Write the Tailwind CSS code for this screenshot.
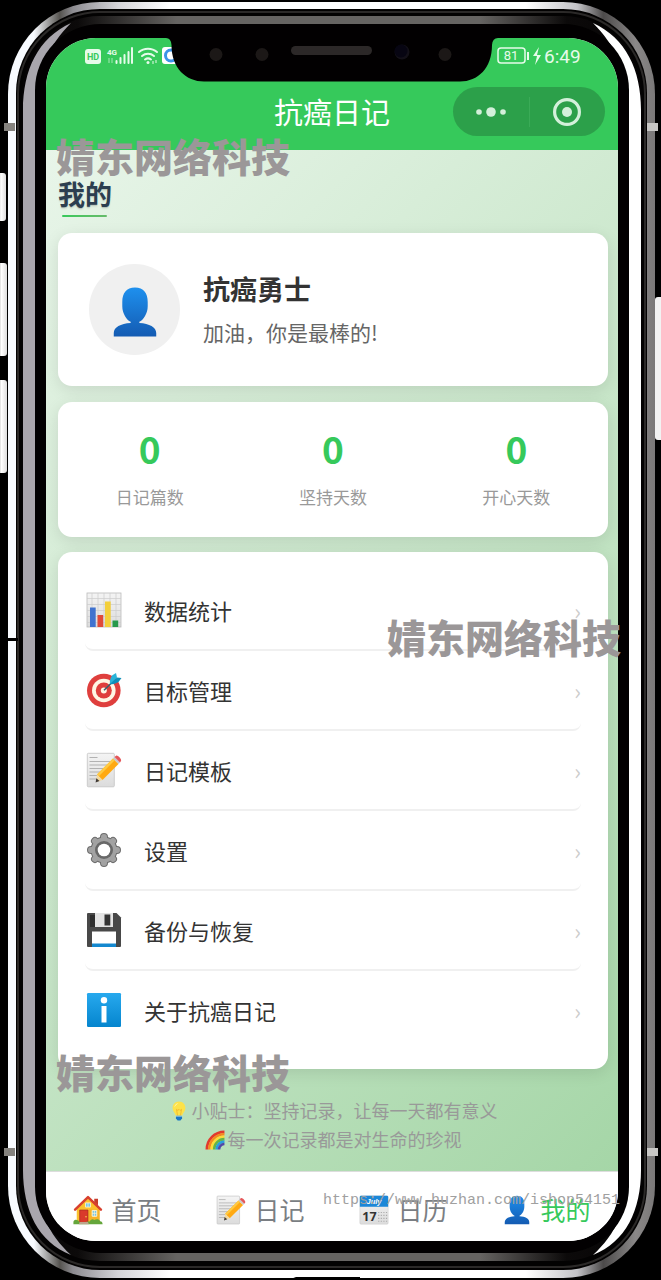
<!DOCTYPE html>
<html lang="zh-CN">
  <head>
    <meta charset="utf-8" />
    <meta name="viewport" content="width=device-width, initial-scale=1" />
    <title>抗癌日记 - 我的</title>
    <script src="https://cdn.jsdelivr.net/npm/@tailwindcss/browser@4"></script>
  </head>
  <body class="bg-black font-['Noto_Sans_CJK_SC',sans-serif] text-[#333]">

    <!-- shared icons -->
    <svg class="absolute size-0" aria-hidden="true">
      <defs>
        <linearGradient id="blue" x1="0" y1="0" x2="0" y2="1"><stop offset="0" stop-color="#1e90ee" /><stop offset="1" stop-color="#145bb2" /></linearGradient>
        <linearGradient id="paper" x1="0" y1="0" x2="0" y2="1"><stop offset="0" stop-color="#f4f4f4" /><stop offset="1" stop-color="#dcdcdc" /></linearGradient>
        <linearGradient id="info" x1="0" y1="0" x2="0" y2="1"><stop offset="0" stop-color="#27a9ee" /><stop offset="1" stop-color="#0585ce" /></linearGradient>
        <symbol id="i-user" viewBox="0 0 36 36">
          <path fill="url(#blue)" d="M18 1c-6 0-8.800 4-8.800 10v3c0 5 3 9.500 5.800 10.800v.8C8 26 3.300 28.500 3.300 32.500V35h29.400v-2.500c0-4-4.700-6.500-11.700-6.900v-.8c2.800-1.300 5.800-5.800 5.800-10.800v-3C26.800 5 24 1 18 1z" />
        </symbol>
        <symbol id="i-memo" viewBox="0 0 36 36">
          <rect x="1.300" y="1.300" width="27" height="33.500" rx="1" fill="url(#paper)" stroke="#c4c4c4" stroke-width=".8" />
          <path d="M3.500 5.500h8M3.500 9.500h22M3.500 13h21M3.500 16.500h18M3.500 20h15M3.500 23.500h11M3.500 27h8" stroke="#aaa" stroke-width=".9" />
          <path fill="#ffa912" d="M11 22.500 27 6.500l5.500 5.500-16 16z" />
          <path fill="#ffca42" d="M11 22.500 27 6.500l1.800 1.800-16 16z" />
          <path fill="#f3d9a0" d="m11 22.500 5.500 5.500-6.500 2.300z" />
          <path fill="#3f3a38" d="m10.300 26.300 3.200 2.800-3.900 1.400z" />
          <path fill="#c9c9c9" d="m27 6.500 1.500-1.500 5.500 5.500-1.500 1.500z" />
          <path fill="#e5575a" d="M28.500 5 30 3.700c1.200-1 6 3.300 5 5.200L34 10.500z" />
        </symbol>
        <symbol id="i-chart" viewBox="0 0 36 36">
          <rect x="1" y="1" width="34" height="34" fill="url(#paper)" stroke="#bbb" stroke-width=".8" />
          <path d="M1 6.500h34M1 12.500h34M1 18.500h34M1 24.500h34M1 30.500h34M6 1v34M12 1v34M18 1v34M24 1v34M30 1v34" stroke="#ccc" stroke-width=".7" />
          <path fill="#3f72cf" d="M4 15.500h5.700V35H4z" />
          <path fill="#e04a39" d="M11.500 23h5.700v12h-5.700z" />
          <path fill="#f3cf3b" d="M19 9.500h5.700V35H19z" />
          <path fill="#289a4c" d="M26.500 28.500h5.700V35h-5.700z" />
        </symbol>
        <symbol id="i-target" viewBox="0 0 36 36">
          <circle cx="17.800" cy="18.500" r="16.800" fill="#df3f3d" />
          <circle cx="17.800" cy="18.500" r="11.800" fill="#fff6e4" />
          <circle cx="17.800" cy="18.500" r="8" fill="#df3f3d" />
          <circle cx="17.800" cy="18.500" r="3" fill="#fff6e4" />
          <path d="M18 18.300 27 9.500" stroke="#39616e" stroke-width="1.500" />
          <path fill="#29b3d8" d="M24 12c-.7-3 .5-6 2-8.500L30 1l1 4.500L26 11z" />
          <path fill="#0f8fb9" d="M24 12c3 .7 6-.5 8.500-2L35.500 6 31 5.500z" />
        </symbol>
        <symbol id="i-gear" viewBox="0 0 36 36">
          <g stroke-linecap="round" stroke="#6c6c6c" stroke-width="8">
            <path d="M18 5v26M5 18h26M9 9l18 18M27 9 9 27" />
          </g>
          <circle cx="18" cy="18" r="13.500" fill="#6c6c6c" />
          <g stroke-linecap="round" stroke="#a2a2a2" stroke-width="6">
            <path d="M18 5v26M5 18h26M9 9l18 18M27 9 9 27" />
          </g>
          <circle cx="18" cy="18" r="12.500" fill="#a2a2a2" />
          <circle cx="18" cy="18" r="9" fill="#686868" />
          <circle cx="18" cy="18" r="6.300" fill="#fff" />
        </symbol>
        <symbol id="i-floppy" viewBox="0 0 36 36">
          <path fill="#484848" d="M2 1h28.500L35 5.500V34a1 1 0 0 1-1 1H2a1 1 0 0 1-1-1V2a1 1 0 0 1 1-1z" />
          <path fill="#e3e3e3" d="M9 1h18v14H9z" />
          <path fill="#333" d="M18.500 2.500h5.800v11h-5.800z" />
          <path fill="#2e2e2e" d="M4 3h5v12H4z" />
          <path fill="#fff" d="M6 19.500h24V32H6z" />
          <path fill="#1488cf" d="M6 31.500h24V35H6z" />
        </symbol>
        <symbol id="i-info" viewBox="0 0 36 36">
          <rect x="1" y="1" width="34" height="34" rx="1.200" fill="url(#info)" />
          <circle cx="18" cy="8.300" r="3.200" fill="#fff" />
          <path fill="#fff" d="M15.500 14h5v16.500h-5z" />
        </symbol>
        <symbol id="i-house" viewBox="0 0 36 36">
          <path fill="#c63d2b" d="M25.500 4.500h4.500v8l-4.500-4z" />
          <path fill="#fbc02d" d="M4.500 16 18 3l14 13v17.500H4.500z" />
          <path fill="#f19b1f" d="M19 17h13v16.500H19z" opacity=".35" />
          <path fill="none" stroke="#d8402f" stroke-width="3" stroke-linejoin="round" stroke-linecap="round" d="M2.500 17.500 18 2.500l15.500 15" />
          <path fill="#74c5ea" stroke="#fff3d0" stroke-width="1" d="M15 9.500h6v5h-6z" />
          <path stroke="#fff3d0" stroke-width=".8" d="M18 9.500v5" />
          <path fill="#d93a2b" stroke="#a12a20" stroke-width=".8" d="M8 18h10v15H8z" />
          <circle cx="15.600" cy="26" r=".9" fill="#ffd54f" />
          <path fill="#74c5ea" stroke="#fff3d0" stroke-width="1.200" d="M23 18.500h5.500v7H23z" />
          <path stroke="#fff3d0" stroke-width=".9" d="M25.700 18.500v7M23 22h5.500" />
          <path fill="#65a63b" d="M.5 35v-2.500c0-2 2-3.500 4-2.500 1.500 0 2.700 1 3 2.500h9v-.8h3v.8c2-3.500 4-4 6-2.500 3-1.500 6-1 7 1.500 2 0 3 1.500 3 3.500z" />
          <path fill="#bda58c" d="M8 32.500h10L19 35H7z" />
        </symbol>
        <symbol id="i-calendar" viewBox="0 0 36 36">
          <rect x="1" y="1" width="34" height="34" rx="1.500" fill="url(#paper)" stroke="#ccc" stroke-width=".6" />
          <path fill="#1b87d8" d="M2.500 1h31A1.500 1.500 0 0 1 35 2.500V14H1V2.500A1.500 1.500 0 0 1 2.500 1z" />
          <text x="18" y="11" text-anchor="middle" font-size="9" font-style="italic" font-weight="700" font-family="Liberation Sans" fill="#fff">July</text>
          <text x="12.500" y="31.500" text-anchor="middle" font-size="15" font-weight="700" font-family="Noto Sans" fill="#333">17</text>
          <path stroke="#aaa" stroke-width="1.400" stroke-dasharray="1.400 1.700" d="M23 21h11M23 24.500h11M23 28h11M23 31.500h11" />
        </symbol>
        <symbol id="i-bulb" viewBox="0 0 36 36">
          <path fill="#fde24a" d="M18 1C10.500 1 6.500 6.500 6.500 12.500c0 6.500 5 8.500 6 14.500h11c1-6 6-8 6-14.500C29.500 6.500 25.500 1 18 1z" />
          <path fill="#fff7b0" d="M17 4c-4 0-7 3-7.300 7.500C12 8 14 6 17 4z" />
          <path fill="none" stroke="#f2b52c" stroke-width="1.500" d="m13.500 15 2.500 2 2-2 2 2 2.500-2-2 12h-5z" />
          <path fill="#8fc7dc" d="M12.500 26h11v3h-11z" />
          <path fill="#1976c5" d="M12.500 28.500h11v3L20.500 35h-5l-3-3.500z" />
        </symbol>
        <symbol id="i-rainbow" viewBox="0 0 36 36">
          <g fill="none" stroke-width="4.700">
            <path stroke="#e23a2e" d="M3.300 35C3.300 17.500 17.500 3.300 35 3.300" />
            <path stroke="#f58a1f" d="M7.700 35C7.700 20 20 7.700 35 7.700" />
            <path stroke="#fbdc3a" d="M12.100 35C12.100 22.300 22.300 12.100 35 12.100" />
            <path stroke="#67b544" d="M16.500 35c0-10.200 8.300-18.500 18.500-18.500" />
            <path stroke="#289fdf" d="M20.900 35c0-7.800 6.300-14.100 14.100-14.100" />
            <path stroke="#5146a8" d="M25.300 35c0-5.400 4.300-9.700 9.700-9.700" />
          </g>
        </symbol>
      </defs>
    </svg>

    <div class="relative flex min-h-screen overflow-hidden pt-[38px] pr-[43px] pb-[39px] pl-[46px]">

      <!-- phone shell -->
      <svg class="absolute inset-0 h-full w-full" viewBox="0 0 661 1280" preserveAspectRatio="none" aria-hidden="true">
        <defs>
          <linearGradient id="rim" x1="0" y1="0" x2="1" y2="0">
            <stop offset="0" stop-color="#f8fbff" /><stop offset=".04" stop-color="#f8fbff" /><stop offset=".08" stop-color="#55534f" /><stop offset=".1" stop-color="#8c8b90" /><stop offset=".17" stop-color="#d4d4d8" /><stop offset=".25" stop-color="#fff" />
            <stop offset=".8" stop-color="#fff" /><stop offset=".88" stop-color="#c2c2c6" /><stop offset=".92" stop-color="#4c4a4a" /><stop offset=".97" stop-color="#8a8888" /><stop offset="1" stop-color="#7a7878" />
          </linearGradient>
          <linearGradient id="band" x1="0" y1="0" x2="1" y2="0">
            <stop offset="0" stop-color="#050304" /><stop offset=".09" stop-color="#0c0a0a" /><stop offset=".25" stop-color="#666462" /><stop offset=".74" stop-color="#666462" /><stop offset=".88" stop-color="#0c0a0a" /><stop offset="1" stop-color="#050304" />
          </linearGradient>
          <linearGradient id="key" x1="0" y1="0" x2="1" y2="0"><stop offset="0" stop-color="#777" /><stop offset=".5" stop-color="#fff" /><stop offset="1" stop-color="#ddd" /></linearGradient>
        </defs>
        <rect x="8" y="2" width="647" height="1276" rx="92" fill="url(#rim)" />
        <rect x="16" y="9" width="631" height="1261" rx="84" fill="#030202" />
        <rect x="18" y="12" width="627" height="1255" rx="82" fill="none" stroke="#2b2928" stroke-width="2" />
        <rect x="22" y="16" width="619" height="1245" rx="78" fill="url(#band)" />
        <path fill="#a9a6ad" d="M71 23C38 38 23 70 23 110v1060c0 40 15 72 48 85-22-20-36-48-36-85V110c0-37 14-65 36-87z" />
        <path fill="#fff" d="M593 23c33 15 48 47 48 87v1060c0 40-15 72-48 85 22-20 36-48 36-85V110c0-37-14-65-36-87z" />
        <rect x="35" y="24" width="594" height="1229" rx="66" fill="#020001" />
        <path fill="#000" d="M8 638h10v3H8zM296 1277h64v3h-72z" />
        <path fill="#85837f" d="M4 123h11v8H4zM4 1148h11v8H4z" />
        <path fill="#c8c7c5" d="M647 123h11v8h-11zM647 1148h11v8h-11z" />
        <rect x="-4" y="173" width="10" height="48" rx="3" fill="url(#key)" />
        <rect x="-4" y="263" width="11" height="93" rx="3" fill="url(#key)" />
        <rect x="-4" y="380" width="11" height="93" rx="3" fill="url(#key)" />
        <rect x="655" y="297" width="12" height="143" rx="3" fill="#f2f2f2" />
      </svg>

      <div class="relative flex flex-1 flex-col overflow-hidden rounded-[50px] bg-white">

        <header class="bg-[#36c95b] text-white">
          <div class="flex h-9 items-center justify-between pr-9 pl-[39px]">
            <svg class="h-5 w-[94px]" viewBox="0 0 94 20" aria-label="HD 4G">
              <rect x="0" y="3" width="16" height="15" rx="3" fill="#e6fbea" />
              <text x="8" y="14" text-anchor="middle" font-size="9" font-weight="700" font-family="Roboto" fill="#36c95b">HD</text>
              <text x="22" y="9" font-size="8" font-weight="700" font-family="Roboto" fill="#e6fbea">4G</text>
              <path d="M24 12v5M27 12v5" stroke="#a5e8b5" stroke-width="1" />
              <path d="M31.500 17v-2M35.500 17v-5M39.500 17v-8M43.500 17V6M47 17V2" stroke="#e6fbea" stroke-width="2" stroke-linecap="round" />
              <g fill="none" stroke="#e6fbea" stroke-width="2" stroke-linecap="round">
                <path d="M54 6c5-4.500 13-4.500 18 0M57 10c3.500-3 8.500-3 12 0M60 13.500c2-1.500 4-1.500 6 0" />
              </g>
              <circle cx="63" cy="16.500" r="1.500" fill="#e6fbea" />
              <path d="M68 15v3M71 14v3" stroke="#e6fbea" stroke-width="1" />
              <rect x="77" y="1" width="16" height="17" rx="3" fill="#fff" />
              <circle cx="86" cy="9.500" r="5.500" fill="none" stroke="#3b93e8" stroke-width="3" />
            </svg>
            <svg class="h-5 w-[85px]" viewBox="0 0 85 20" aria-label="81% 6:49">
              <rect x="1" y="2" width="27" height="15" rx="3" fill="none" stroke="#e6fbea" stroke-width="1.500" />
              <text x="14" y="14" text-anchor="middle" font-size="13" font-family="Roboto" fill="#e6fbea">81</text>
              <path d="M31 6v8" stroke="#e6fbea" stroke-width="2" />
              <path fill="#e6fbea" d="m42 1-6 9h4l-2 9 6-10h-4z" />
              <text x="47" y="17" font-size="19" font-family="Roboto" fill="#e6fbea">6:49</text>
            </svg>
          </div>
          <div class="relative flex h-[76px] items-center justify-center">
            <h1 class="pb-0.5 text-[29px] leading-none">抗癌日记</h1>
            <div class="absolute top-[13px] right-[13px] flex h-[49px] w-[152px] items-center rounded-full bg-[#2ca04a]">
              <button class="flex flex-1 justify-center" aria-label="更多">
                <svg class="h-[10px] w-[30px]" viewBox="0 0 30 10" fill="#d3f0da"><circle cx="3" cy="5" r="2.800" /><circle cx="15" cy="5" r="4.800" /><circle cx="27" cy="5" r="2.800" /></svg>
              </button>
              <span class="h-[30px] w-px bg-[#3aab57]"></span>
              <button class="flex flex-1 justify-center" aria-label="关闭">
                <svg class="size-7" viewBox="0 0 28 28"><circle cx="14" cy="14" r="12.400" fill="none" stroke="#d3f0da" stroke-width="3.200" /><circle cx="14" cy="14" r="5" fill="#d3f0da" /></svg>
              </button>
            </div>
          </div>
        </header>

        <!-- notch -->
        <svg class="absolute top-0 left-1/2 h-11 w-[332px] -translate-x-1/2" viewBox="0 0 332 44" aria-hidden="true">
          <path fill="#020001" d="M0 0q5 0 5.500 7C5.500 30 20 43.500 38 43.500h256C312 43.500 326 30 326 7q.5-7 6-7z" />
          <g fill="#1c1817"><circle cx="50" cy="16.500" r="6.500" /><circle cx="96" cy="16.500" r="6.500" /><circle cx="279" cy="16.500" r="6.500" /></g>
          <rect x="125" y="8" width="81" height="9" rx="4.500" fill="#2c2828" />
          <circle cx="236" cy="14" r="7.500" fill="#131018" /><circle cx="235" cy="13" r="6.500" fill="#070512" />
        </svg>

        <main class="flex-1 bg-linear-135 from-[#e8f5e9] via-[#c8e6c9] to-[#a5d6a7] pt-7 pr-[10px] pb-4 pl-3">
          <h2 class="text-[27px] leading-8 font-bold text-[#2c3e50] text-shadow-sm">我的</h2>
          <div class="mt-[5px] ml-1 h-0.5 w-[45px] rounded-full bg-linear-to-r from-[#36c95b] to-[#66bb6a]"></div>

          <section class="mt-4 flex h-[153px] items-center gap-[23px] rounded-[14px] bg-white px-[31px] shadow-[0_4px_16px_rgba(0,0,0,0.1)]">
            <div class="flex size-[91px] shrink-0 items-center justify-center rounded-full bg-[#f0f0f0]">
              <svg class="mt-1 size-[52px]"><use href="#i-user" /></svg>
            </div>
            <div>
              <p class="text-[27px] leading-[44px] font-bold">抗癌勇士</p>
              <p class="text-[21px] leading-[42px] text-[#666]">加油，你是最棒的!</p>
            </div>
          </section>

          <section class="mt-4 grid h-[135px] grid-cols-3 items-center rounded-[14px] bg-white pb-0.5 text-center shadow-[0_4px_16px_rgba(0,0,0,0.1)]">
            <div>
              <p class="text-[37px] leading-[56px] font-bold text-[#36c95b]">0</p>
              <p class="text-[17px] leading-[42px] text-[#999]">日记篇数</p>
            </div>
            <div>
              <p class="text-[37px] leading-[56px] font-bold text-[#36c95b]">0</p>
              <p class="text-[17px] leading-[42px] text-[#999]">坚持天数</p>
            </div>
            <div>
              <p class="text-[37px] leading-[56px] font-bold text-[#36c95b]">0</p>
              <p class="text-[17px] leading-[42px] text-[#999]">开心天数</p>
            </div>
          </section>

          <nav class="mt-[15px] rounded-[14px] bg-white px-[27px] pt-[19px] pb-[18px] text-[22px] shadow-[0_4px_16px_rgba(0,0,0,0.1)]">
            <a href="#stats" class="flex h-20 items-center rounded-lg border-b-2 border-[#f0f0f0]">
              <svg class="mr-[22px] ml-px size-9"><use href="#i-chart" /></svg>
              <span class="flex-1">数据统计</span>
              <span class="text-[#ccc]">›</span>
            </a>
            <a href="#goals" class="flex h-20 items-center rounded-lg border-b-2 border-[#f0f0f0]">
              <svg class="mr-[22px] ml-px size-9"><use href="#i-target" /></svg>
              <span class="flex-1">目标管理</span>
              <span class="text-[#ccc]">›</span>
            </a>
            <a href="#templates" class="flex h-20 items-center rounded-lg border-b-2 border-[#f0f0f0]">
              <svg class="mr-[22px] ml-px size-9"><use href="#i-memo" /></svg>
              <span class="flex-1">日记模板</span>
              <span class="text-[#ccc]">›</span>
            </a>
            <a href="#settings" class="flex h-20 items-center rounded-lg border-b-2 border-[#f0f0f0]">
              <svg class="mr-[22px] ml-px size-9"><use href="#i-gear" /></svg>
              <span class="flex-1">设置</span>
              <span class="text-[#ccc]">›</span>
            </a>
            <a href="#backup" class="flex h-20 items-center rounded-lg border-b-2 border-[#f0f0f0]">
              <svg class="mr-[22px] ml-px size-9"><use href="#i-floppy" /></svg>
              <span class="flex-1">备份与恢复</span>
              <span class="text-[#ccc]">›</span>
            </a>
            <a href="#about" class="flex h-20 items-center border-b-2 border-transparent">
              <svg class="mr-[22px] ml-px size-9"><use href="#i-info" /></svg>
              <span class="flex-1">关于抗癌日记</span>
              <span class="text-[#ccc]">›</span>
            </a>
          </nav>

          <div class="mt-[27px] text-lg leading-[29px] text-[#999]">
            <p class="flex items-center justify-center gap-[3px]"><svg class="size-5"><use href="#i-bulb" /></svg>小贴士：坚持记录，让每一天都有意义</p>
            <p class="flex items-center justify-center gap-[3px]"><svg class="size-5"><use href="#i-rainbow" /></svg>每一次记录都是对生命的珍视</p>
          </div>
        </main>

        <nav class="grid h-[70px] grid-cols-4 border-t border-[#ddd] bg-white text-[25px] text-[#7a7e83]">
          <a href="#home" class="flex items-center justify-center gap-2 pt-1.5"><svg class="size-[30px]"><use href="#i-house" /></svg>首页</a>
          <a href="#diary" class="flex items-center justify-center gap-2 pt-1.5"><svg class="size-[30px]"><use href="#i-memo" /></svg>日记</a>
          <a href="#calendar" class="flex items-center justify-center gap-2 pt-1.5"><svg class="size-[30px]"><use href="#i-calendar" /></svg>日历</a>
          <a href="#mine" class="flex items-center justify-center gap-2 pt-1.5 text-[#36c95b]"><svg class="size-[30px]"><use href="#i-user" /></svg>我的</a>
        </nav>
      </div>

      <!-- watermarks -->
      <p class="pointer-events-none absolute top-[132px] left-[56px] text-[39px] leading-[46px] font-black whitespace-nowrap text-[#9b9798]">婧东网络科技</p>
      <p class="pointer-events-none absolute top-[613px] left-[387px] text-[39px] leading-[46px] font-black whitespace-nowrap text-[#9b9798]">婧东网络科技</p>
      <p class="pointer-events-none absolute top-[1048px] left-[56px] text-[39px] leading-[46px] font-black whitespace-nowrap text-[#9b9798]">婧东网络科技</p>
      <p class="pointer-events-none absolute top-[1192px] left-[323px] font-['Liberation_Mono',monospace] text-[15px] leading-[18px] whitespace-nowrap text-[#a0a0a0]">https://www.huzhan.com/ishop54151</p>
    </div>
  </body>
</html>
